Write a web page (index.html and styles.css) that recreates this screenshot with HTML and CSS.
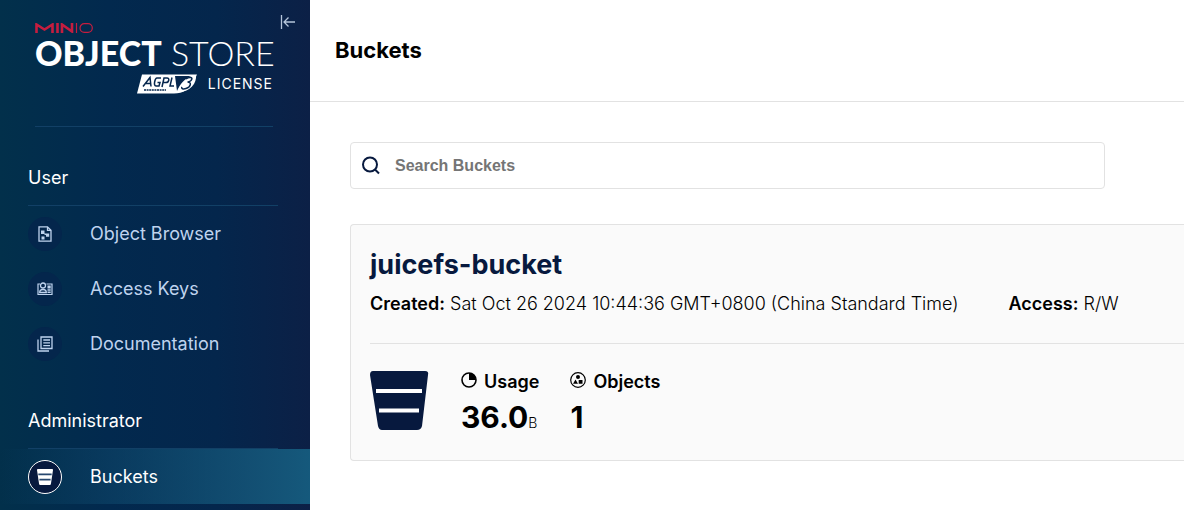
FILE: index.html
```html
<!DOCTYPE html>
<html lang="en">
<head>
<meta charset="utf-8">
<meta name="viewport" content="width=device-width, initial-scale=1">
<title>Buckets</title>
<link rel="stylesheet" href="styles.css">
</head>
<body>
<div class="app">
  <aside class="sidebar">
    <div class="brand">
      <button class="collapse" type="button" aria-label="Collapse menu">
        <svg viewBox="0 0 16 16" width="16" height="16" fill="none" stroke="currentColor" stroke-width="1.3"><path d="M1.500 1v14M15 8H4M8.500 3.500L4 8l4.500 4.500"/></svg>
      </button>
      <div class="logo">
        <svg class="minio" viewBox="0 0 58 10" width="58" height="10" role="img" aria-label="MinIO" fill="none" stroke="currentColor"><path d="M1.500 10V1.500L9.500 6.500L17.500 1.500V10M22.500 0v10M27 10V1.500L37 8.500V0" stroke-width="2.600"/><path d="M41.500 0v10" stroke-width="1.200"/><rect x="45" y=".700" width="12.300" height="8.600" rx="4.300" stroke-width="1.200"/></svg>
        <div class="wordmark"><b>OBJECT</b> STORE</div>
        <div class="license">
          <svg viewBox="0 0 62 22" width="62" height="22" role="img" aria-label="AGPL v3">
            <path d="M6 1.500H61L58 8C54 16 47 20.500 38 20.500H1Z" fill="#fff"/>
            <path d="M39 3L41 18C44 11 49 5.500 55 3Z" fill="#05264d"/>
            <path d="M43 19C45 12 50 5 60 2C61 10 54 19 43 19Z" fill="#fff"/>
            <g fill="none" stroke="#05264d" stroke-width="1.500"><path d="M7 13.500L14 4.500L15 13.500M10 10.500H15M25 5H21C19 5 17 13 20 13H23L24 9.500H21.500M26 14L28 5H31C34 5 33 9.500 30 9.500H27M36 4.500L34 13H38"/><path d="M50 6C53 3.500 58 4 55 7.500C54 8.500 53 9 51.500 9C56 9 55 14 50 15.500C47 16.500 45 15.500 46 14"/></g>
            <path d="M8 17H30" stroke="#05264d" stroke-width="1.300" stroke-dasharray="2 .6"/>
          </svg>
          <span>LICENSE</span>
        </div>
      </div>
    </div>
    <nav class="menu">
      <section>
        <h2>User</h2>
        <a class="item" href="#browser"><span class="icon"><svg viewBox="0 0 16 16" width="16" height="16"><path d="M2 .800H10.500L14 4.300V15.200H2ZM10.500 .800V4.300H14" fill="none" stroke="currentColor" stroke-width="1.300"/><path d="M4 4.500h3.500v3.500H4zM9 7.500h3.200v3.200H9zM7.500 7.500h1.500v1.500h-1.500zM4.500 10.500h3v3h-3z" fill="currentColor"/></svg></span>Object Browser</a>
        <a class="item" href="#keys"><span class="icon"><svg viewBox="0 0 16 16" width="16" height="16"><path d="M3 3H1V13.500H15V3H9.500" fill="none" stroke="currentColor" stroke-width="1.200"/><circle cx="6" cy="4.500" r="2.500" fill="none" stroke="currentColor" stroke-width="1.300"/><path d="M2.700 11.500C2.700 7.500 9.300 7.500 9.300 11.500Z" fill="none" stroke="currentColor" stroke-width="1.300"/><path d="M10.500 4.500h3.200v3h-3.200zM10.500 8.300h3.200v1.400h-3.200zM10.500 10.600h3.200v1.400h-3.200z" fill="currentColor"/></svg></span>Access Keys</a>
        <a class="item" href="#docs"><span class="icon"><svg viewBox="0 0 16 16" width="16" height="16" fill="none" stroke="currentColor" stroke-width="1.300"><path d="M4 1H15V12.500H4ZM1 3.500V15H12M6.300 4H13M6.300 6.800H13M6.300 9.600H13"/></svg></span>Documentation</a>
      </section>
      <section>
        <h2>Administrator</h2>
        <a class="item active" href="#buckets"><span class="icon"><svg viewBox="0 0 60 60" width="16" height="16"><path d="M3 0H57Q60 0 60 4L52 57Q51 60 48 60H12Q9 60 8 57L0 4Q0 0 3 0Z" fill="#fff"/><path d="M5 20H55M9 40H51" stroke="#27476f" stroke-width="6"/></svg></span>Buckets</a>
      </section>
    </nav>
  </aside>
  <main class="main">
    <header class="topbar"><h1>Buckets</h1></header>
    <div class="content">
      <label class="search">
        <svg viewBox="0 0 20 20" width="20" height="20" fill="none" stroke="#07193e" stroke-width="2"><circle cx="9" cy="8.500" r="7"/><path d="M14 13.500L18 17.500"/></svg>
        <input type="search" placeholder="Search Buckets" aria-label="Search Buckets">
      </label>
      <article class="card">
        <h2>juicefs-bucket</h2>
        <div class="meta">
          <span><b>Created:</b> Sat Oct 26 2024 10:44:36 GMT+0800 (China Standard Time)</span>
          <span><b>Access:</b> R/W</span>
        </div>
        <div class="stats">
          <svg class="bucket" viewBox="0 0 60 60" width="60" height="60"><path d="M3 1H55Q59 1 58 5L52 56Q51 60 47 60H12Q9 60 8 56L0 5Q0 1 3 1Z" fill="#07193e"/><path d="M6 21H52M9 40.500H49" stroke="#fff" stroke-width="4"/></svg>
          <div class="stat">
            <h3><svg viewBox="0 0 16 16" width="16" height="16"><circle cx="8" cy="8" r="7" fill="none" stroke="#000" stroke-width="1.600"/><path d="M8 8V1A7 7 0 0 1 15 8Z"/></svg>Usage</h3>
            <p>36.0<small>B</small></p>
          </div>
          <div class="stat">
            <h3><svg viewBox="0 0 16 16" width="16" height="16"><circle cx="8" cy="8" r="7.300" fill="none" stroke="#000" stroke-width="1.200"/><circle cx="8" cy="5" r="2"/><path d="M8.700 8h3.800v3.800H8.700zM5.500 7.500L8 11.800H3z"/></svg>Objects</h3>
            <p>1</p>
          </div>
        </div>
      </article>
    </div>
  </main>
</div>
</body>
</html>
```
FILE: styles.css
```css
* { box-sizing: border-box; }
body {
  margin: 0;
  background: #fff;
  color: #000;
  font-family: Inter, "Liberation Sans", sans-serif;
  font-size: 18px;
  line-height: 24px;
}
h1, h2, h3, p { margin: 0; }
svg { display: block; flex: none; }
.app { display: flex; min-height: 100vh; overflow: hidden; }

.sidebar {
  flex: 0 0 310px;
  min-width: 0;
  background: linear-gradient(90deg, #02304b 0%, #02294e 35%, #04264c 70%, #0c2046 100%);
  color: #fff;
}
.brand { position: relative; padding: 23px 37px 0 35px; }
.collapse {
  position: absolute;
  top: 14px;
  right: 14px;
  padding: 0;
  border: 0;
  background: none;
  color: #b5c5da;
}
.logo { height: 104px; border-bottom: 1px solid #124066; }
.minio { color: #c51d3f; }
.wordmark {
  font-family: Lato, sans-serif;
  font-size: 34px;
  font-weight: 300;
  line-height: 40px;
  white-space: nowrap;
}
.wordmark b { font-weight: 900; }
.license {
  display: flex;
  align-items: center;
  justify-content: flex-end;
  gap: 10px;
  font-size: 14px;
  line-height: 18px;
  letter-spacing: 1px;
}
.menu { display: grid; gap: 38px; padding-top: 39px; }
.menu h2 {
  margin: 0 32px 0 28px;
  padding-bottom: 15px;
  border-bottom: 1px solid #124066;
  font-size: 18px;
  font-weight: 400;
}
.item {
  display: flex;
  align-items: center;
  gap: 28px;
  height: 55px;
  padding-left: 28px;
  color: #bfd3ee;
  text-decoration: none;
}
.icon {
  display: grid;
  place-items: center;
  width: 34px;
  height: 34px;
  border-radius: 50%;
  background: #04264c;
}
.active { color: #fff; background: linear-gradient(90deg, transparent, #15597c); }
.active .icon { border: 1px solid #fff; background: #07193e; }

.main { flex: 1; min-width: 0; }
.topbar { padding: 38px 25px 39px; border-bottom: 1px solid #e2e2e2; }
.topbar h1 { font-size: 22px; font-weight: 700; }
.content { padding: 40px 0 40px 40px; }
.search {
  display: flex;
  align-items: center;
  gap: 14px;
  height: 47px;
  margin-right: 79px;
  padding: 0 10px;
  border: 1px solid #e2e2e2;
  border-radius: 4px;
}
.search input {
  flex: 1;
  min-width: 0;
  padding: 0;
  border: 0;
  outline: 0;
  background: none;
  font: 700 16px/24px "Liberation Sans", Arial, sans-serif;
}
.search input::placeholder { color: #757575; opacity: 1; }
.card {
  margin-top: 35px;
  padding: 20px 0 19px 19px;
  border: 1px solid #e2e2e2;
  border-right: 0;
  border-radius: 4px 0 0 4px;
  background: #fafafa;
}
.card h2 { color: #07193e; font-size: 27px; font-weight: 700; line-height: 40px; }
.meta {
  display: flex;
  gap: 50px;
  padding: 7px 0 27px;
  border-bottom: 1px solid #e2e2e2;
  font-weight: 300;
  white-space: nowrap;
}
.meta b { font-weight: 600; }
.stats { display: flex; gap: 31px; padding-top: 26px; }
.stat h3 { display: flex; align-items: center; gap: 7px; font-size: 18px; font-weight: 600; }
.stat h3 svg { margin-bottom: 4px; }
.stat p { font-size: 30px; font-weight: 700; line-height: 36px; margin-top: 5px; }
.stat small { font-size: 14px; font-weight: 300; }
```
